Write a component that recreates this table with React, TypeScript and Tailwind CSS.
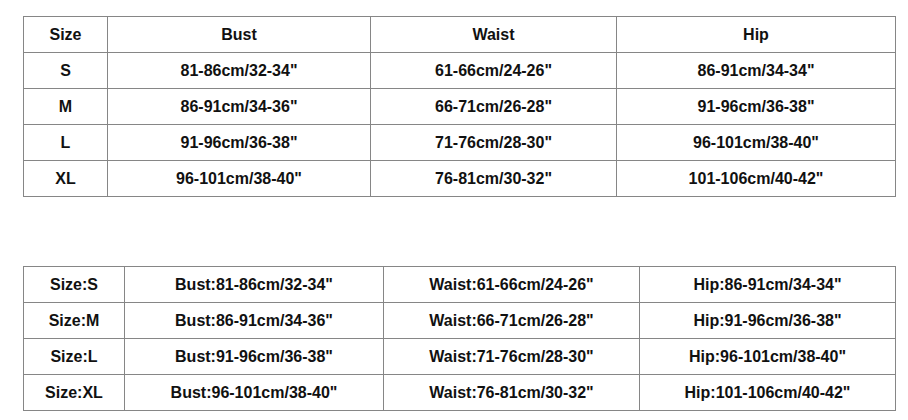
import React from 'react';

const top = {
  head: ["Size", "Bust", "Waist", "Hip"],
  rows: [
    ["S", "81-86cm/32-34\"", "61-66cm/24-26\"", "86-91cm/34-34\""],
    ["M", "86-91cm/34-36\"", "66-71cm/26-28\"", "91-96cm/36-38\""],
    ["L", "91-96cm/36-38\"", "71-76cm/28-30\"", "96-101cm/38-40\""],
    ["XL", "96-101cm/38-40\"", "76-81cm/30-32\"", "101-106cm/40-42\""],
  ],
};

const bottomRows = [
  ["Size:S", "Bust:81-86cm/32-34\"", "Waist:61-66cm/24-26\"", "Hip:86-91cm/34-34\""],
  ["Size:M", "Bust:86-91cm/34-36\"", "Waist:66-71cm/26-28\"", "Hip:91-96cm/36-38\""],
  ["Size:L", "Bust:91-96cm/36-38\"", "Waist:71-76cm/28-30\"", "Hip:96-101cm/38-40\""],
  ["Size:XL", "Bust:96-101cm/38-40\"", "Waist:76-81cm/30-32\"", "Hip:101-106cm/40-42\""],
];

const Cell = ({ children }: { children: React.ReactNode }) => (
  <div className="bg-white h-[35px] flex items-center justify-center text-[16px] font-bold text-[#111]">
    {children}
  </div>
);

const App = () => {
  return (
    <div className="w-[908px] h-[420px] bg-white pt-[16px] pl-[23px] font-['Liberation_Sans',Arial,sans-serif] overflow-hidden">
      <div className="grid grid-cols-[83px_262px_245px_278px] gap-px p-px bg-[#868686] w-fit">
        {top.head.map((h) => (
          <Cell key={h}>{h}</Cell>
        ))}
        {top.rows.map((row) =>
          row.map((c, i) => <Cell key={row[0] + i}>{c}</Cell>)
        )}
      </div>

      <div className="mt-[69px] grid grid-cols-[100px_258px_255px_255px] gap-px p-px bg-[#868686] w-fit">
        {bottomRows.map((row) =>
          row.map((c, i) => <Cell key={row[0] + i}>{c}</Cell>)
        )}
      </div>
    </div>
  );
};

export default App;
